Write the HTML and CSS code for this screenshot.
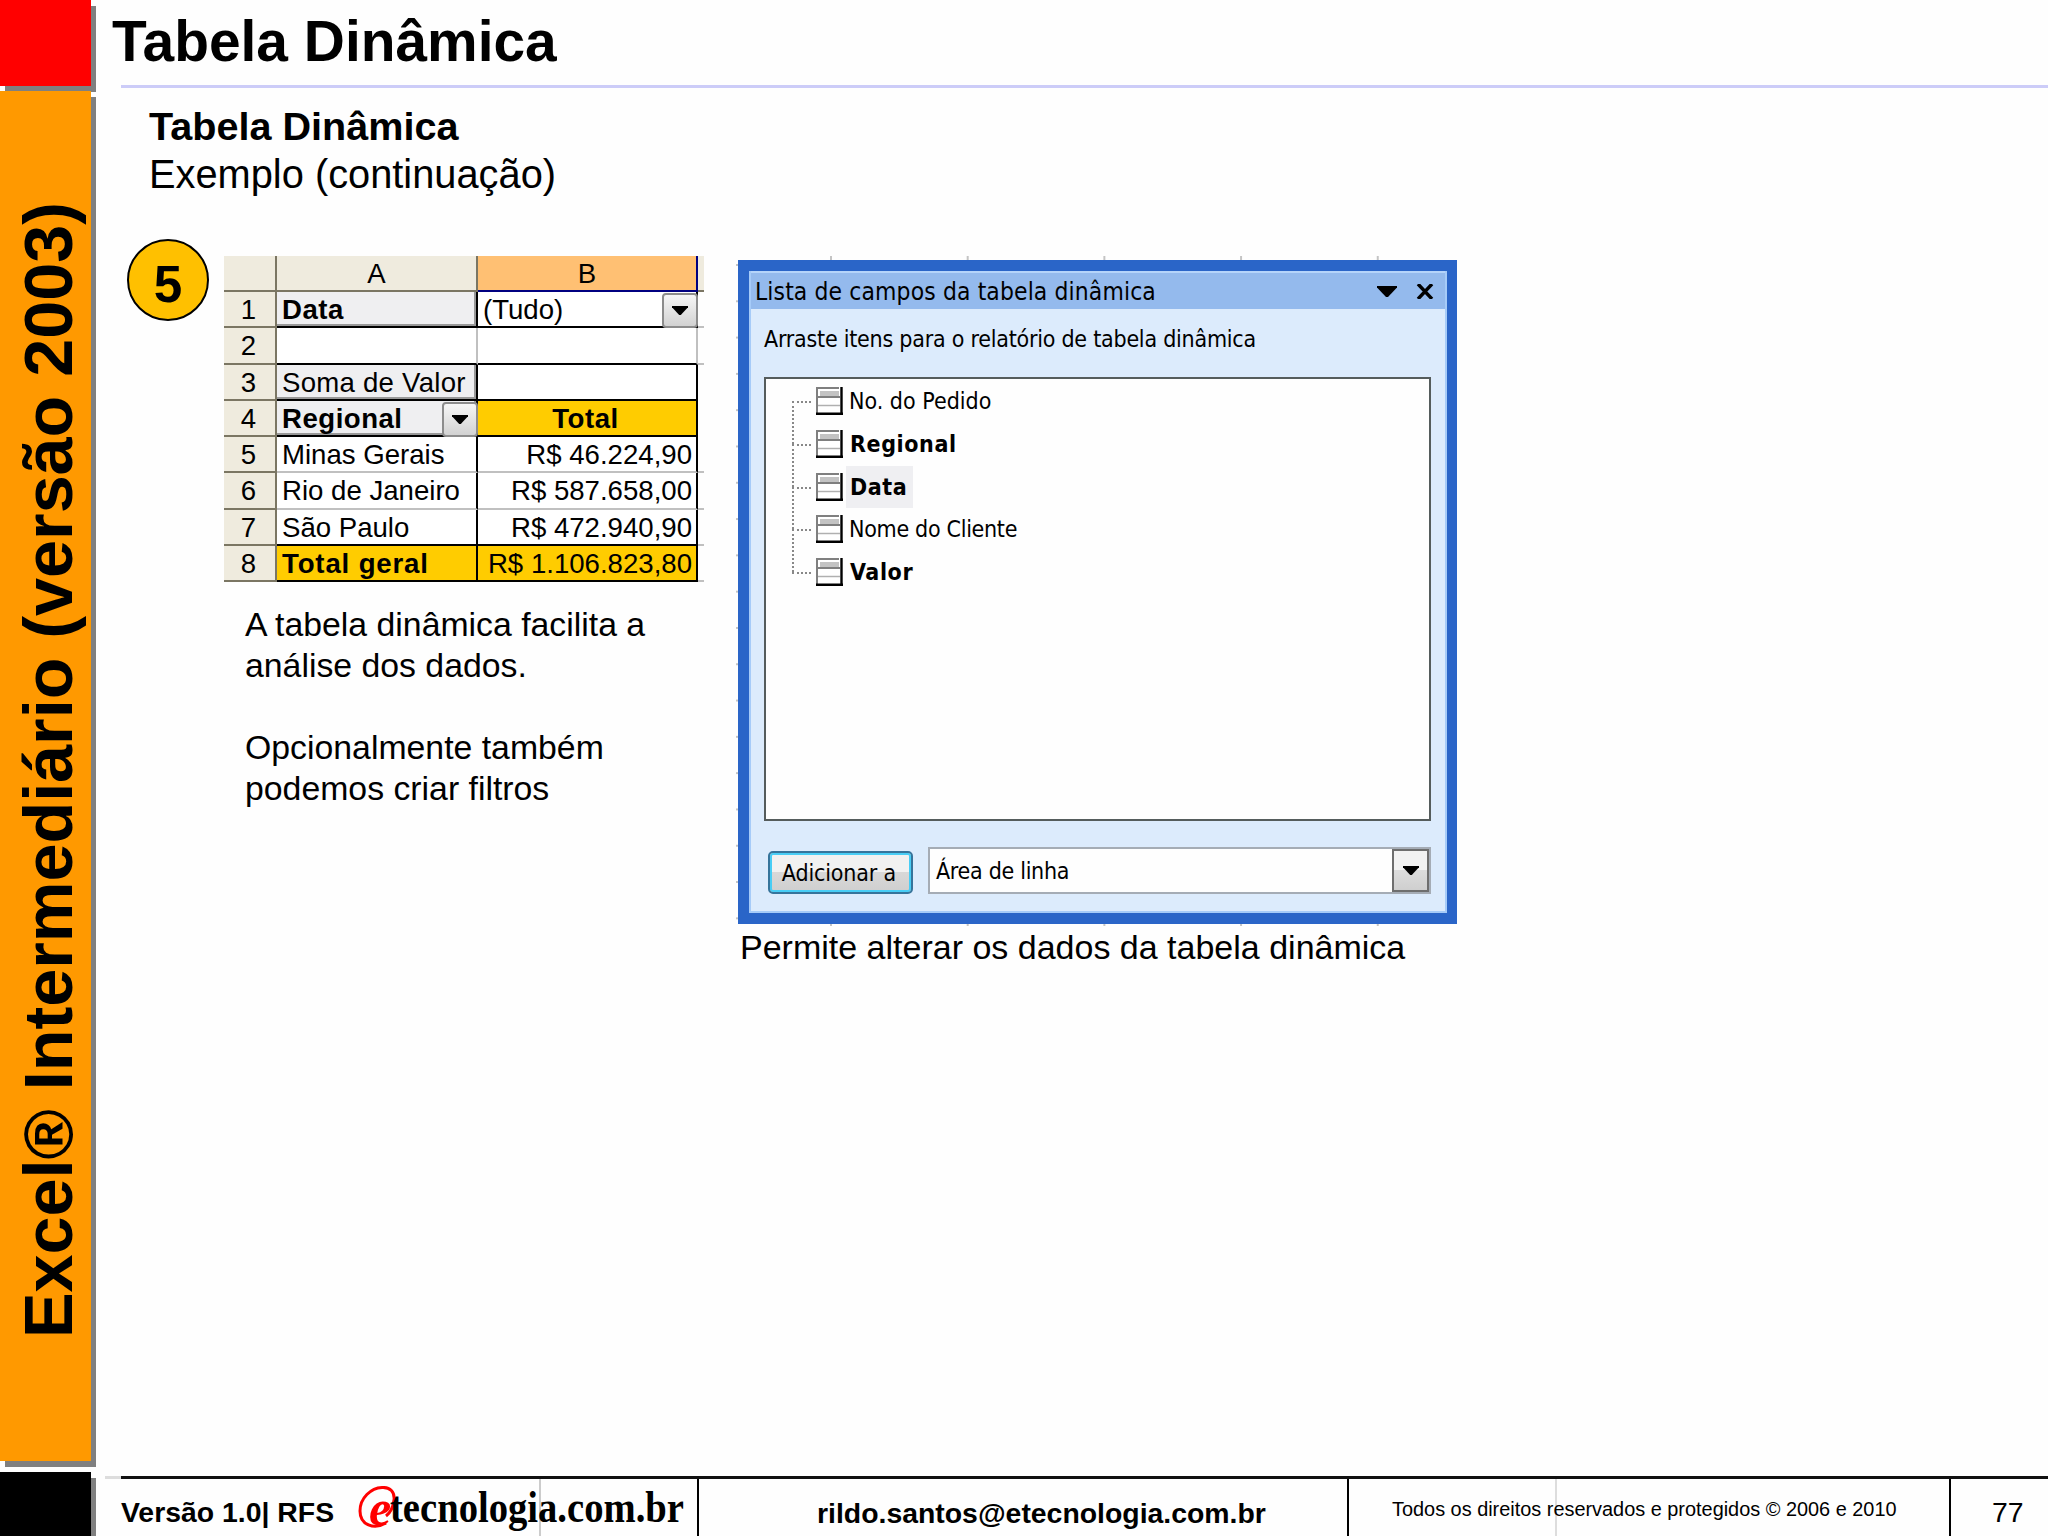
FILE: index.html
```html
<!DOCTYPE html>
<html lang="pt-BR">
<head>
  <meta charset="UTF-8">
  <title>Tabela Dinâmica</title>
  <link rel="stylesheet" href="styles.css">
</head>
<body>
  <svg class="defs" width="0" height="0">
    <symbol id="field" viewBox="0 0 27 28">
      <rect x="1" y="1" width="24" height="26" fill="#fff"/>
      <rect x="4" y="4" width="19" height="5" fill="#c3c3c3"/>
      <path d="M0 1h23M1 0v28M2 10h22" stroke="#7f7f7f" stroke-width="2"/>
      <path d="M2 18.500h22" stroke="#b0b0b0" stroke-width="1.500"/>
      <path d="M25.500 0v27M0 26.800h27" stroke="#000" stroke-width="2.400"/>
    </symbol>
    <symbol id="arrow" viewBox="0 0 20 11">
      <path d="M0 0h20v1.500L11 11H9L0 1.500z"/>
    </symbol>
  </svg>

  <div class="slide">
    <aside class="sidebar">
      <div class="block red"></div>
      <div class="block orange"><span class="course">Excel® Intermediário (versão 2003)</span></div>
      <div class="block black"></div>
    </aside>

    <main class="main">
      <header class="header">
        <h1>Tabela Dinâmica</h1>
      </header>

      <div class="subtitle">
        <h2>Tabela Dinâmica</h2>
        <p>Exemplo (continuação)</p>
      </div>

      <section class="content">
        <div class="step">5</div>

        <div class="left">
          <!-- Spreadsheet -->
          <div class="sheet">
            <div class="head"></div>
            <div class="head">A</div>
            <div class="head active">B</div>
            <div class="head edge"></div>

            <div class="num">1</div>
            <div class="cell field bold">Data</div>
            <div class="cell dark">(Tudo)<span class="drop"><svg><use href="#arrow"/></svg></span></div>
            <div class="edge"></div>

            <div class="num">2</div>
            <div class="cell dark faint-r"></div>
            <div class="cell dark faint-r"></div>
            <div class="edge"></div>

            <div class="num">3</div>
            <div class="cell field">Soma de Valor</div>
            <div class="cell dark"></div>
            <div class="edge blank"></div>

            <div class="num">4</div>
            <div class="cell field bold">Regional<span class="drop"><svg><use href="#arrow"/></svg></span></div>
            <div class="cell dark gold bold center">Total</div>
            <div class="edge blank"></div>

            <div class="num">5</div>
            <div class="cell">Minas Gerais</div>
            <div class="cell right">R$ 46.224,90</div>
            <div class="edge"></div>

            <div class="num">6</div>
            <div class="cell">Rio de Janeiro</div>
            <div class="cell right">R$ 587.658,00</div>
            <div class="edge"></div>

            <div class="num">7</div>
            <div class="cell dark">São Paulo</div>
            <div class="cell dark right">R$ 472.940,90</div>
            <div class="edge"></div>

            <div class="num">8</div>
            <div class="cell dark gold bold wide">Total geral</div>
            <div class="cell dark gold right">R$ 1.106.823,80</div>
            <div class="edge"></div>
          </div>

          <div class="text">
            <p>A tabela dinâmica facilita a<br>análise dos dados.</p>
            <p>Opcionalmente também<br>podemos criar filtros</p>
          </div>
        </div>

        <div class="right-col">
          <!-- Field list window -->
          <div class="backdrop">
            <div class="pane">
              <div class="pane-title">
                <span class="t-title">Lista de campos da tabela dinâmica</span>
                <svg class="menu"><use href="#arrow"/></svg>
                <svg class="close" viewBox="0 0 18 15"><path d="M2 0l14 15M16 0L2 15" stroke="#000" stroke-width="3.400"/></svg>
              </div>
              <div class="pane-body">
                <p class="hint">Arraste itens para o relatório de tabela dinâmica</p>
                <ul class="fields">
                  <li><svg><use href="#field"/></svg><span>No. do Pedido</span></li>
                  <li><svg><use href="#field"/></svg><b>Regional</b></li>
                  <li><svg><use href="#field"/></svg><b class="selected">Data</b></li>
                  <li><svg><use href="#field"/></svg><span class="tight">Nome do Cliente</span></li>
                  <li><svg><use href="#field"/></svg><b>Valor</b></li>
                </ul>
                <div class="actions">
                  <button class="add">Adicionar a</button>
                  <div class="combo">
                    <span class="tight">Área de linha</span>
                    <span class="combo-btn"><svg><use href="#arrow"/></svg></span>
                  </div>
                </div>
              </div>
            </div>
          </div>
          <p class="caption">Permite alterar os dados da tabela dinâmica</p>
        </div>
      </section>

      <footer class="footer">
        <div class="foot version">
          <span>Versão 1.0| RFS</span>
          <span class="logo">
            <svg class="ring" viewBox="0 0 38 44">
              <path d="M28 37C16 44 2 39 2 25C2 12 13 2 24 1.500C32 1 37 6 36 14C35 22 32 27 28 30" fill="none" stroke="#f00" stroke-width="3"/>
            </svg>
            <span class="logo-e">e</span>
            <span class="logo-text">tecnologia.com.br</span>
          </span>
        </div>
        <div class="foot mail">rildo.santos@etecnologia.com.br</div>
        <div class="foot rights">Todos os direitos reservados e protegidos © 2006 e 2010</div>
        <div class="foot page">77</div>
      </footer>
    </main>
  </div>
</body>
</html>
```
FILE: styles.css
```css
* {
  box-sizing: border-box;
}

body {
  margin: 0;
  background: #fefefe;
  color: #000;
  font-family: "Liberation Sans", Arial, sans-serif;
}

h1, h2, p, ul {
  margin: 0;
  padding: 0;
}

.defs {
  position: absolute;
}

.slide {
  display: flex;
  width: 2048px;
  height: 1536px;
  overflow: hidden;
}

/* Left colour bar */
.sidebar {
  width: 105px;
  display: flex;
  flex-direction: column;
}

.block {
  width: 91px;
  box-shadow: 5px 6px 0 #808080;
  clip-path: inset(0 -10px -10px 0);
}

.red {
  height: 86px;
  background: #f00;
  margin-bottom: 5px;
}

.orange {
  height: 1370px;
  background: #f90;
  margin-bottom: 11px;
  display: flex;
  align-items: flex-end;
  padding: 0 0 123px 8px;
}

.black {
  flex: 1;
  background: #000;
}

.course {
  writing-mode: vertical-rl;
  text-orientation: sideways;
  transform: rotate(180deg);
  font-size: 68.3px;
  line-height: 80px;
  font-weight: bold;
  white-space: nowrap;
}

/* Main column */
.main {
  flex: 1;
  display: flex;
  flex-direction: column;
}

.header {
  height: 88px;
  margin-left: 16px;
  padding-top: 9px;
  border-bottom: 3px solid #ccccf8;
}

.header h1 {
  margin-left: -9px;
  font-size: 56.9px;
  line-height: 64px;
}

.subtitle {
  padding: 14px 0 0 44px;
  font-size: 39.8px;
  line-height: 48px;
}

.subtitle h2 {
  font-size: 39.6px;
}

.content {
  flex: 1;
  display: flex;
  padding: 58px 0 0 22px;
}

.step {
  width: 82px;
  height: 82px;
  margin: -17px 15px 0 0;
  border: 2px solid #000;
  border-radius: 50%;
  background: #ffc000;
  font-size: 51.2px;
  font-weight: bold;
  line-height: 87px;
  text-align: center;
}

/* Spreadsheet */
.sheet {
  display: grid;
  grid-template-columns: 53px 201px 220px 6px;
  grid-template-rows: 36px repeat(8, 36.250px);
  font-size: 27.6px;
  line-height: 36px;
}

.head,
.num {
  background: #efebde;
  border-right: 2px solid #7b7663;
  border-bottom: 2px solid #7b7663;
  text-align: center;
}

.num {
  padding-right: 2px;
}

.head.active {
  background: #ffc073;
  border-color: #000080;
}

.edge {
  border-bottom: 2px solid #c0c0c0;
}

.head.edge {
  border-right: 0;
  border-bottom-color: #7b7663;
}

.edge.blank {
  border-bottom-color: transparent;
}

.cell {
  position: relative;
  background: #fff;
  border-right: 2px solid #000;
  border-bottom: 2px solid #c0c0c0;
  padding-left: 5px;
  white-space: nowrap;
}

.cell.dark {
  border-bottom-color: #000;
}

.cell.faint-r {
  border-right-color: #c0c0c0;
}

.cell.field {
  background: #efeff1;
  border-bottom-color: #000;
  box-shadow: inset -2px -2px 0 #999;
  letter-spacing: 0.250px;
}

.cell.gold {
  background: #fc0;
}

.cell.bold {
  font-weight: bold;
  letter-spacing: 0.500px;
}

.cell.wide {
  letter-spacing: 0.850px;
}

.cell.center {
  padding-right: 8px;
  text-align: center;
}

.right {
  text-align: right;
  padding-right: 4px;
}

.drop {
  position: absolute;
  top: 1px;
  right: -2px;
  width: 36px;
  height: 35px;
  border: 2px solid #8c8c8c;
  border-radius: 4px;
  background: linear-gradient(#f6f6f6, #d2d2d2);
  display: flex;
  align-items: center;
  justify-content: center;
}

.drop svg {
  width: 16px;
  height: 9px;
}

.text {
  margin: 22px 0 0 21px;
  font-size: 33.8px;
  line-height: 41px;
}

.text p + p {
  margin-top: 41px;
}

/* Field list window */
.right-col {
  margin-left: 32px;
}

.backdrop {
  width: 721px;
  padding: 4px 0 2px 2px;
  background:
    linear-gradient(#fefefe, #fefefe) 2px 4px / 100% 664px no-repeat,
    linear-gradient(90deg, #c4c4c4 2px, transparent 2px) 94px 0 / 136.700px 100%,
    linear-gradient(#c4c4c4 2px, transparent 2px) 0 8px / 2px 36.300px repeat-y;
}

.pane {
  height: 664px;
  border: solid #2a65c8;
  border-width: 11px 10px 11px 11px;
  background: #dcebfc;
  box-shadow: inset 0 0 0 2px #a6cbf8;
  font-family: "DejaVu Sans Condensed", "DejaVu Sans", sans-serif;
  font-stretch: condensed;
  font-size: 23px;
}

.pane-title {
  height: 38px;
  margin: 0 2px;
  padding: 0 11px 0 4px;
  background: #94baed;
  border-top: 2px solid #b5d4fa;
  display: flex;
  align-items: center;
}

.t-title {
  flex: 1;
  font-size: 24.4px;
  letter-spacing: 0.130px;
  white-space: nowrap;
}

.menu {
  width: 20px;
  height: 11px;
}

.close {
  width: 18px;
  height: 15px;
  margin-left: 19px;
}

.pane-body {
  padding: 14px 16px 0 15px;
}

.hint {
  height: 54px;
  line-height: 32px;
  letter-spacing: -0.240px;
  white-space: nowrap;
}

.fields {
  height: 444px;
  border: 2px solid #555c5c;
  background: #fefefe;
  list-style: none;
  padding: 1px 0 0 26px;
}

.fields li {
  position: relative;
  height: 42.700px;
  display: flex;
  align-items: center;
  padding-left: 24px;
}

.fields li svg {
  width: 27px;
  height: 28px;
  margin-right: 3px;
}

.fields li span,
.fields li b {
  line-height: 42px;
  padding: 0 3px;
}

.fields li b {
  padding: 0 4px;
  letter-spacing: 0.600px;
}

.fields li .tight,
.combo .tight {
  letter-spacing: -0.300px;
}

/* Dotted tree lines */
.fields li::before {
  content: "";
  position: absolute;
  left: 0;
  top: 50%;
  width: 19px;
  border-top: 2px dotted #888;
}

.fields li:not(:last-child)::after {
  content: "";
  position: absolute;
  left: 0;
  top: 50%;
  height: 100%;
  border-left: 2px dotted #888;
}

.fields li .selected {
  padding-right: 6px;
  background: #efeff2;
}

.actions {
  display: flex;
  align-items: flex-end;
  gap: 15px;
  margin-top: 26px;
  padding-left: 4px;
}

.add {
  width: 145px;
  height: 43px;
  padding: 0 3px 0 0;
  border: 2px solid #36749b;
  border-radius: 5px;
  box-shadow: inset 0 0 0 2px #48cdf5;
  background: linear-gradient(#f1f1f1 50%, #d8d8d8 50%, #cfcfcf);
  color: #000;
  font: inherit;
  letter-spacing: -0.150px;
}

.combo {
  flex: 1;
  height: 47px;
  border: 2px solid #a5acb5;
  background: #fefefe;
  display: flex;
  align-items: center;
  justify-content: space-between;
  padding-left: 6px;
}

.combo-btn {
  width: 37px;
  height: 43px;
  border: 2px solid #6e6e6e;
  background: linear-gradient(#f2f2f2 50%, #dcdcdc 50%, #cfcfcf);
  display: flex;
  align-items: center;
  justify-content: center;
}

.combo-btn svg {
  width: 16px;
  height: 9px;
}

.caption {
  margin-left: 4px;
  padding-top: 1px;
  font-size: 34px;
  line-height: 41px;
  white-space: nowrap;
}

/* Footer */
.footer {
  height: 60px;
  border-top: 3px solid #000;
  border-image: linear-gradient(90deg, #ddd 19px, #111 19px) 3;
  display: flex;
}

.foot {
  line-height: 34px;
  padding-top: 16px;
  font-size: 28.4px;
  font-weight: bold;
  border-right: 2px solid #000;
  white-space: nowrap;
}

.version {
  width: 594px;
  padding-left: 16px;
  display: flex;
  background: linear-gradient(#ccc, #ccc) 434px 0 / 2px 100% no-repeat;
}

.logo {
  display: flex;
  margin-left: 24px;
}

.ring {
  width: 38px;
  height: 44px;
  margin-top: -9px;
}

.logo-e {
  width: 22px;
  margin: -4px 0 0 -27px;
  color: #f00;
  font: italic bold 50px/34px "Liberation Serif", "Times New Roman", serif;
}

.logo-text {
  width: 294px;
  margin: -4px 0 0 -1px;
  font: bold 44px/34px "Liberation Serif", "Times New Roman", serif;
  transform: scaleX(0.878);
  transform-origin: left;
}

.mail {
  width: 650px;
  padding-top: 17px;
  padding-left: 118px;
}

.rights {
  width: 602px;
  padding: 14px 0 0 43px;
  font-size: 19.9px;
  font-weight: normal;
  line-height: 32px;
  background: linear-gradient(#ddd, #ddd) 206px 0 / 2px 100% no-repeat;
}

.page {
  flex: 1;
  border-right: 0;
  padding-left: 41px;
  font-weight: normal;
}
```
